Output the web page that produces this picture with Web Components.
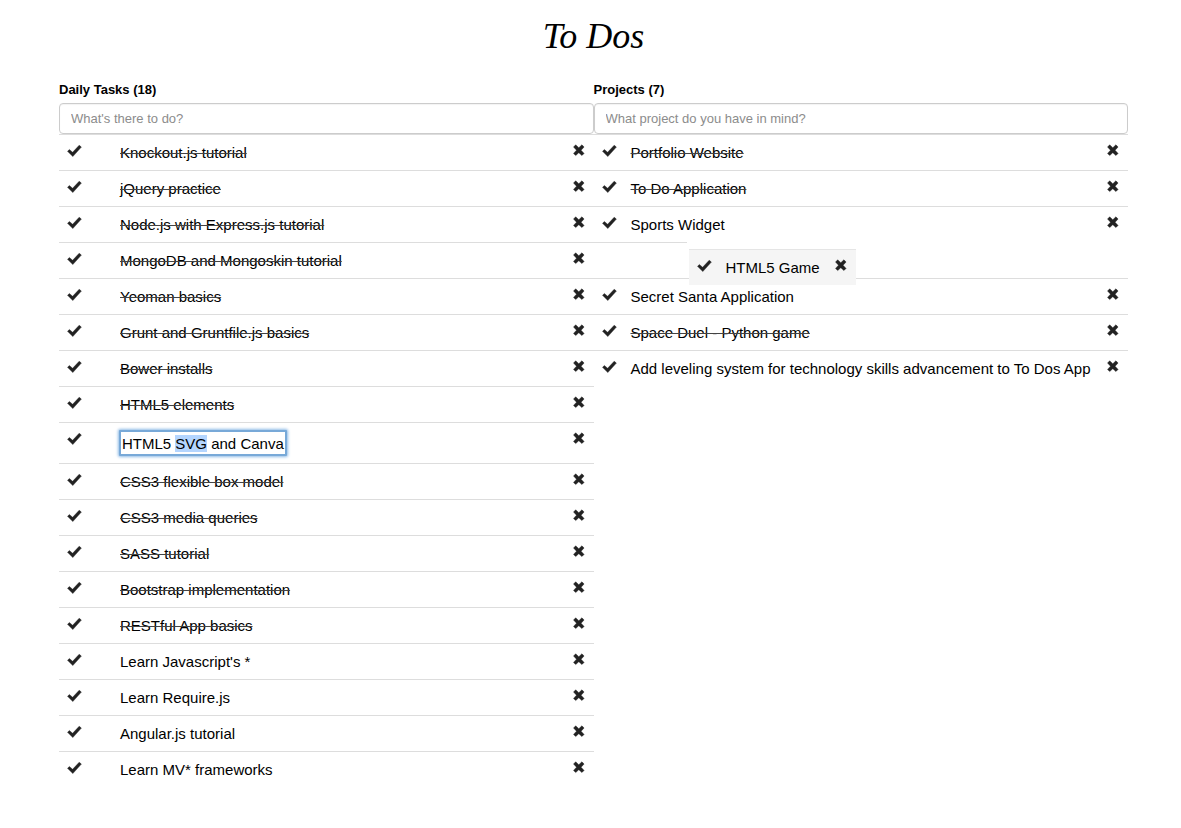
<!DOCTYPE html>
<html lang="en">
<head>
<meta charset="utf-8">
<meta name="viewport" content="width=device-width, initial-scale=1">
<title>To Dos</title>
<style>
  body { margin: 0; background: #fff; color: #000; font: 15px/20px "Liberation Sans", Arial, sans-serif; }
</style>
</head>
<body>
<todo-app>
  <todo-list heading="Daily Tasks (18)" placeholder="What's there to do?" style="--indent: 37px; --end: 9px">
    <todo-item done>Knockout.js tutorial</todo-item>
    <todo-item done>jQuery practice</todo-item>
    <todo-item done>Node.js with Express.js tutorial</todo-item>
    <todo-item done>MongoDB and Mongoskin tutorial</todo-item>
    <todo-item done>Yeoman basics</todo-item>
    <todo-item done>Grunt and Gruntfile.js basics</todo-item>
    <todo-item done>Bower installs</todo-item>
    <todo-item done>HTML5 elements</todo-item>
    <todo-item><todo-editor value="HTML5 SVG and Canva" select="SVG"></todo-editor></todo-item>
    <todo-item done>CSS3 flexible box model</todo-item>
    <todo-item done>CSS3 media queries</todo-item>
    <todo-item done>SASS tutorial</todo-item>
    <todo-item done>Bootstrap implementation</todo-item>
    <todo-item done>RESTful App basics</todo-item>
    <todo-item>Learn Javascript's *</todo-item>
    <todo-item>Learn Require.js</todo-item>
    <todo-item>Angular.js tutorial</todo-item>
    <todo-item>Learn MV* frameworks</todo-item>
  </todo-list>
  <todo-list heading="Projects (7)" placeholder="What project do you have in mind?" style="--indent: 13px; --end: 9px">
    <todo-item done>Portfolio Website</todo-item>
    <todo-item done>To Do Application</todo-item>
    <todo-item>Sports Widget</todo-item>
    <todo-drop-slot><todo-item dragging>HTML5 Game</todo-item></todo-drop-slot>
    <todo-item>Secret Santa Application</todo-item>
    <todo-item done>Space Duel - Python game</todo-item>
    <todo-item>Add leveling system for technology skills advancement to To Dos App</todo-item>
  </todo-list>
</todo-app>

<script>
function attach(el, markup) {
  const template = document.createElement('template');
  template.innerHTML = markup;
  const root = el.attachShadow({ mode: 'open' });
  root.append(template.content.cloneNode(true));
  return root;
}

class TodoApp extends HTMLElement {
  constructor() {
    super();
    attach(this, `
      <style>
        :host { display: block; padding: 12px 53px 40px 59px; }
        h1 { margin: 0 0 20px; font: italic 36px/48px "Monotype Corsiva", "Liberation Serif", serif; text-align: center; }
        main { display: grid; grid-template-columns: 1fr 1fr; align-items: start; }
      </style>
      <h1>To Dos</h1>
      <main><slot></slot></main>`);
  }
}

class TodoList extends HTMLElement {
  connectedCallback() {
    if (this.shadowRoot) return;
    const root = attach(this, `
      <style>
        :host { display: block; min-width: 0; }
        label { display: block; font-size: 13px; line-height: 20px; font-weight: bold; margin-bottom: 3px; }
        input { display: block; box-sizing: border-box; width: 100%; height: 31px; padding: 0 11px; border: 1px solid #ccc;
          border-radius: 4px; background: #fff; color: #555; font: 13px/20px "Liberation Sans", Arial, sans-serif;
          box-shadow: inset 0 1px 1px rgba(0,0,0,.05); }
        input::placeholder { color: #8c8c8c; opacity: 1; }
      </style>
      <label for="entry"></label>
      <input id="entry" type="text">
      <div role="list"><slot></slot></div>`);
    root.querySelector('label').textContent = this.getAttribute('heading');
    root.querySelector('input').placeholder = this.getAttribute('placeholder');
  }
}

class TodoItem extends HTMLElement {
  connectedCallback() {
    if (this.shadowRoot) return;
    this.setAttribute('role', 'listitem');
    attach(this, `
      <style>
        :host { display: flex; align-items: flex-start; box-sizing: border-box; min-height: 36px;
          border-top: 1px solid #ddd; padding: 0 var(--end) 0 8px; }
        button { flex: none; display: block; margin: 9px 0 0; padding: 0; border: 0; background: none; color: #222; cursor: pointer; }
        svg { display: block; fill: currentColor; stroke: currentColor; stroke-width: .4; stroke-linejoin: round; }
        .text { flex: 1; min-width: 0; padding: 8px 0 7px; margin-left: var(--indent); }
        :host([done]) .text { text-decoration: line-through 1px #444; }
        :host([dragging]) { background: #f5f5f5; border-top-color: #e5e5e5; --indent: 13px; --end: 9px; }
      </style>
      <button type="button" aria-label="Mark as done">
        <svg width="16" height="14" viewBox="0 0 16 14"><path d="M.5 7.3 2.4 5.5 5.6 8.3 12.2 1.2 14.4 3.1 5.8 12.6Z"/></svg>
      </button>
      <span class="text"><slot></slot></span>
      <button type="button" aria-label="Remove">
        <svg width="12" height="13" viewBox="0 0 12 13"><path d="M2.7 .8 5.8 3.7 8.9 .8 11.1 3 8.1 6.2 11.1 9.4 8.9 11.6 5.8 8.7 2.7 11.6 .5 9.4 3.5 6.2 .5 3Z"/></svg>
      </button>`);
  }
}

class TodoDropSlot extends HTMLElement {
  constructor() {
    super();
    attach(this, `
      <style>
        :host { display: block; position: relative; height: 36px; }
        .edge { width: 93px; border-top: 1px solid #ddd; }
        ::slotted(todo-item) { position: absolute; left: 95px; top: 7px; width: 167px; }
      </style>
      <div class="edge"></div>
      <slot></slot>`);
  }
}

class TodoEditor extends HTMLElement {
  connectedCallback() {
    if (this.shadowRoot) return;
    const root = attach(this, `
      <style>
        :host { display: block; margin: -1px 0 0 -1px; }
        input { display: block; box-sizing: border-box; width: 168px; height: 26px; margin: 0; padding: 0 0 0 1px;
          border: 2px solid #78a9d8; border-radius: 1px; outline: 0; box-shadow: 0 0 3px 1px #8fbbe6;
          background: #fff; color: #000; font: 15px/20px "Liberation Sans", Arial, sans-serif; }
        input::selection { background: #b4d5fe; color: #000; }
      </style>
      <input type="text" aria-label="Edit task">`);
    const input = root.querySelector('input');
    input.value = this.getAttribute('value');
    const word = this.getAttribute('select');
    const start = input.value.indexOf(word);
    input.focus({ preventScroll: true });
    input.setSelectionRange(start, start + word.length);
  }
}

customElements.define('todo-app', TodoApp);
customElements.define('todo-list', TodoList);
customElements.define('todo-item', TodoItem);
customElements.define('todo-drop-slot', TodoDropSlot);
customElements.define('todo-editor', TodoEditor);
</script>
</body>
</html>
